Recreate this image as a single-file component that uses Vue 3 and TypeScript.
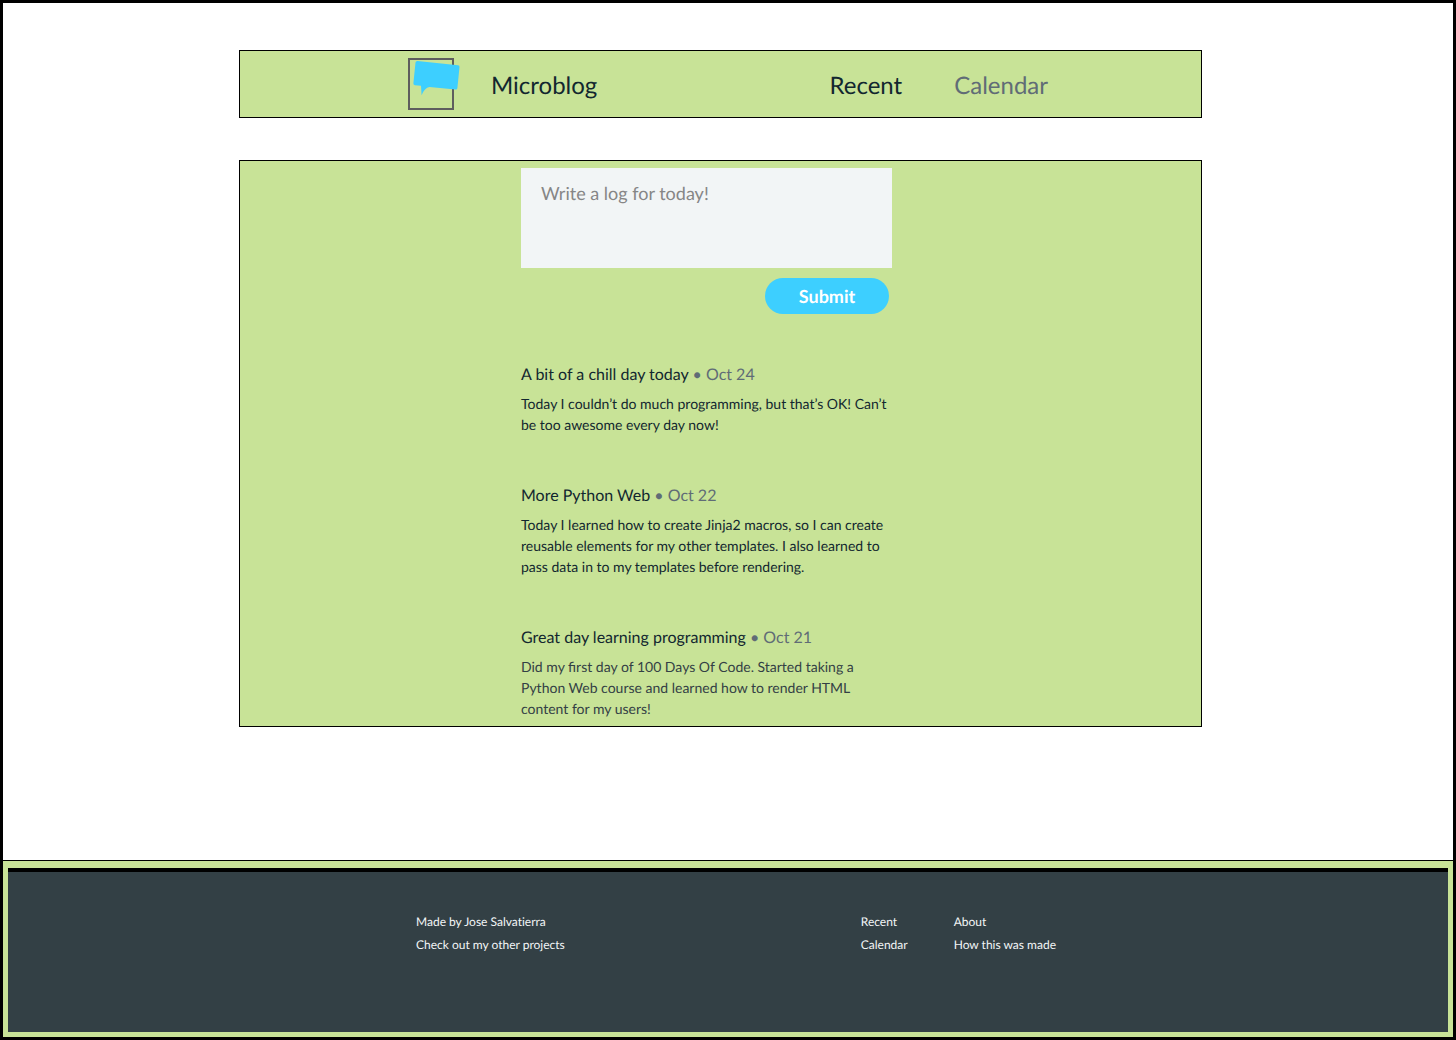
<script setup lang="ts">
import { ref } from 'vue'

interface Entry {
  title: string
  date: string
  content: string
  faded?: boolean
}

const draft = ref('')

const entries = ref<Entry[]>([
  {
    title: 'A bit of a chill day today',
    date: 'Oct 24',
    content:
      'Today I couldn’t do much programming, but that’s OK! Can’t be too awesome every day now!',
  },
  {
    title: 'More Python Web',
    date: 'Oct 22',
    content:
      'Today I learned how to create Jinja2 macros, so I can create reusable elements for my other templates. I also learned to pass data in to my templates before rendering.',
  },
  {
    title: 'Great day learning programming',
    date: 'Oct 21',
    content:
      'Did my first day of 100 Days Of Code. Started taking a Python Web course and learned how to render HTML content for my users!',
    faded: true,
  },
])

function submit() {
  const text = draft.value.trim()
  if (!text) return
  const date = new Date().toLocaleDateString('en-US', { month: 'short', day: 'numeric' })
  entries.value.unshift({ title: 'Today', date, content: text })
  draft.value = ''
}
</script>

<template>
  <div class="page">
    <div class="content">
      <header class="panel header">
        <div class="header-inner">
          <a class="brand" href="#">
            <svg class="logo" width="52" height="52" viewBox="0 0 52 52" aria-hidden="true">
              <rect x="1" y="1" width="44" height="50" fill="none" stroke="#5e5e5e" stroke-width="2" />
              <path
                fill="#3dcfff"
                d="M9.4 3 L50 7.200 Q51.700 7.400 51.500 9 L49.400 30 Q49.200 31.700 47.500 31.500 L21.500 28.900 Q16.500 29.500 13.600 37.300 L13 27.800 L6.900 27.200 Q5.200 27 5.400 25.300 L7.500 4.600 Q7.700 2.900 9.400 3 Z"
              />
            </svg>
            <span class="brand-name">Microblog</span>
          </a>
          <nav class="nav">
            <a class="nav-link active" href="#">Recent</a>
            <a class="nav-link" href="#calendar">Calendar</a>
          </nav>
        </div>
      </header>

      <main class="panel main">
        <div class="column">
          <form class="form" @submit.prevent="submit">
            <textarea
              v-model="draft"
              class="input"
              name="content"
              aria-label="Write a log for today!"
              placeholder="Write a log for today!"
            ></textarea>
            <button class="submit" type="submit">Submit</button>
          </form>

          <div class="entries">
            <article v-for="entry in entries" :key="entry.title" class="entry">
              <h2 class="entry-title">
                {{ entry.title }} <span class="entry-date">• {{ entry.date }}</span>
              </h2>
              <p class="entry-text" :class="{ faded: entry.faded }">{{ entry.content }}</p>
            </article>
          </div>
        </div>
      </main>
    </div>

    <footer class="footer">
      <div class="footer-body">
        <div class="footer-inner">
          <div class="links">
            <span>Made by Jose Salvatierra</span>
            <a href="#projects">Check out my other projects</a>
          </div>
          <div class="link-groups">
            <div class="links">
              <a href="#">Recent</a>
              <a href="#calendar">Calendar</a>
            </div>
            <div class="links">
              <a href="#about">About</a>
              <a href="#how">How this was made</a>
            </div>
          </div>
        </div>
      </div>
    </footer>
  </div>
</template>

<style>
body {
  margin: 0;
  background: #fff;
}
</style>

<style scoped>
.page {
  box-sizing: border-box;
  display: flex;
  flex-direction: column;
  min-height: 100vh;
  border: 3px solid #000;
  font-family: Lato, 'Liberation Sans', sans-serif;
  text-rendering: geometricPrecision;
  color: #12272f;
}

a {
  color: inherit;
  text-decoration: none;
}

.content {
  display: flex;
  flex-direction: column;
  align-items: center;
  gap: 42px;
  padding: 47px 15px 42px 0;
}

.panel {
  box-sizing: border-box;
  width: 100%;
  max-width: 963px;
  border: 1px solid #000;
  background: #c8e397;
}

.header {
  padding: 7px 0 7px 15px;
}

.header-inner {
  display: flex;
  align-items: center;
  justify-content: space-between;
  max-width: 640px;
  margin: 0 auto;
  font-size: 24px;
  line-height: 34px;
}

.brand {
  display: flex;
  align-items: center;
  gap: 31px;
}

.logo {
  display: block;
}

.brand-name,
.nav {
  padding-top: 4px;
}

.nav {
  display: flex;
  gap: 52px;
}

.nav-link {
  color: #606c76;
}

.nav-link.active {
  color: #12272f;
}

.main {
  padding: 7px 28px 7px 0;
}

.column {
  max-width: 371px;
  margin: 0 auto;
}

.form {
  display: flex;
  flex-direction: column;
}

.input {
  box-sizing: border-box;
  width: 100%;
  height: 100px;
  padding: 13px 20px;
  border: 0;
  background: #f2f5f6;
  color: #12272f;
  font-family: inherit;
  font-size: 18px;
  line-height: 24px;
  text-rendering: inherit;
  resize: none;
}

.input::placeholder {
  color: #868686;
}

.submit {
  align-self: flex-end;
  width: 124px;
  height: 36px;
  margin: 10px 3px 0 0;
  padding: 0;
  border: 0;
  border-radius: 18px;
  background: #3dcfff;
  color: #fff;
  font-family: inherit;
  font-size: 18px;
  font-weight: 700;
  text-rendering: inherit;
  cursor: pointer;
}

.entries {
  display: flex;
  flex-direction: column;
  gap: 49px;
  margin-top: 49px;
}

.entry-title {
  margin: 0;
  font-size: 16px;
  font-weight: 400;
  line-height: 24px;
}

.entry-date {
  color: #606c76;
}

.entry-text {
  margin: 6px 0 0;
  font-size: 14px;
  line-height: 21px;
}

.entry-text.faded {
  color: #334045;
}

.footer {
  margin-top: auto;
  padding: 7px 5px 5px;
  border-top: 1px solid #000;
  background: #c8e397;
}

.footer-body {
  box-sizing: border-box;
  min-height: 164px;
  padding: 38px 0 38px 16px;
  border-top: 4px solid #000;
  background: #334045;
  color: #f2f5f6;
  font-size: 12px;
  line-height: 23px;
  font-variant-ligatures: none;
}

.footer-inner {
  display: flex;
  justify-content: space-between;
  max-width: 640px;
  margin: 0 auto;
}

.links {
  display: flex;
  flex-direction: column;
}

.link-groups {
  display: flex;
  gap: 46px;
}
</style>
